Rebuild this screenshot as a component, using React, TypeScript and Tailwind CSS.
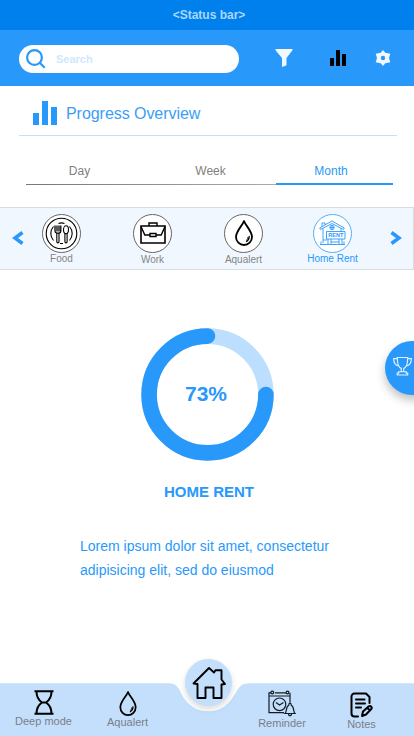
import React from "react";

type IconProps = { className?: string };

const Bars = ({ className }: IconProps) => (
  <svg viewBox="0 0 24 24" className={className} fill="currentColor" shapeRendering="crispEdges">
    <path d="M0 12h6v12H0zM9 0h6v24H9zM18 6h6v18h-6z" />
  </svg>
);

const Drop = ({ className }: IconProps) => (
  <svg viewBox="0 0 18 26" className={className} fill="none" stroke="currentColor" strokeWidth="1.8" strokeLinecap="round" strokeLinejoin="round">
    <path d="M9 1C7.500 5.500 1 11 1 17a8 8 0 0 0 16 0C17 11 10.500 5.500 9 1Z" />
    <path d="M14.200 16.500c0 2.500-1 4-2.700 5" strokeWidth="1.300" />
    <path d="M12.800 17.500c0 1.300-.4 2-1.200 2.600" strokeWidth=".8" />
  </svg>
);

const Plate = () => (
  <svg viewBox="0 0 33 33" className="size-[33px] text-black" fill="none" stroke="currentColor" strokeWidth="1.100">
    <circle cx="16.500" cy="16.500" r="15.300" />
    <path d="M8.500 9.500a10.500 10.500 0 0 0 0 14M24.500 9.500a10.500 10.500 0 0 1 0 14M13.500 6.400c2-.7 4-.7 6 0M15 26.500h3" />
    <path d="M11.800 16v8.500c0 1.800 2.200 1.800 2.200 0V16M19.900 16.500v8c0 1.800 2.200 1.800 2.200 0v-8" />
    <path d="M10 8.500V14c0 1.500 1 2 1.800 2.200H14c1-.2 1.800-.7 1.800-2.200V8.500M12 8.500v6M14 8.500v6" strokeWidth="1.300" />
    <ellipse cx="21" cy="12.700" rx="2.500" ry="3.900" />
  </svg>
);

const Briefcase = () => (
  <svg viewBox="0 0 26 22" className="-mt-0.5 h-[22px] w-[26px] text-black" fill="none" stroke="currentColor" strokeWidth="1.600">
    <path d="M1 4h24v17H1z" />
    <path d="M9 4V1h8v3M1 4.500 4.800 13H10M16 13h5.200L25 4.500M10 11.500h6v3h-6z" strokeWidth="1.400" />
  </svg>
);

const RentHouse = () => (
  <svg viewBox="0 0 28 26" className="-mt-0.5 h-[26px] w-7 text-[#2899fb]" fill="none" stroke="currentColor" strokeWidth=".9">
    <path d="M1.500 9.500.700 8 13 1l12.300 7-.8 1.500L13 3.500 1.500 9.500ZM4 8.500V23M22 8.500v3M3 6.500V3h3v2" />
    <path d="M7.500 11.500H26v7.500H7.500zM1 24.500h25M4 20h4M9 19v5M12 19v5M20 19v5M23 19v5M2 21.500v3M25 21.500v3M12 22h8" />
    <circle cx="13" cy="7.500" r="2.200" />
    <path d="M13 5.300v4.400M10.800 7.500h4.400" />
    <text x="16.800" y="17.300" textAnchor="middle" fontSize="5.500" fontWeight="bold" fill="currentColor" stroke="none" className="font-['Liberation_Sans',sans-serif]">RENT</text>
  </svg>
);

const Chevron = ({ className }: IconProps) => (
  <svg viewBox="0 0 12 14" className={className} fill="none" stroke="#2899fb" strokeWidth="3.500">
    <path d="M10.500 1.500 3 7l7.500 5.500" />
  </svg>
);

function Category({ label, active, children }: { label: string; active?: boolean; children: React.ReactNode }) {
  return (
    <div className="flex w-[91px] flex-col items-center">
      <div className={`flex size-[39px] items-center justify-center rounded-full border bg-white ${active ? "border-[#55aefb]" : "border-[#666]"}`}>
        {children}
      </div>
      <span className={`whitespace-nowrap text-[10px] leading-3 ${active ? "text-[#2899fb]" : "text-[#858585]"} ${label === "Work" || label === "Aqualert" ? "pt-px" : ""}`}>{label}</span>
    </div>
  );
}

export default function App() {
  return (
    <div className="relative flex h-[736px] w-[414px] flex-col overflow-hidden bg-white font-['Liberation_Sans',Arial,sans-serif]">
      <div className="flex h-[30px] shrink-0 items-center justify-center bg-[#0080ec] pl-1 text-xs font-bold text-[#a9d7ff]">&lt;Status bar&gt;</div>

      <header className="flex h-14 shrink-0 items-center bg-[#2899fb] pl-[19px]">
        <div className="mt-[2px] flex h-7 w-[220px] items-center rounded-full bg-white pl-[7px]">
          <svg viewBox="0 0 20 20" className="-mt-px size-5 text-[#2899fb]" fill="none" stroke="currentColor" strokeWidth="2.200">
            <circle cx="8.500" cy="8.500" r="7.400" />
            <path d="m13.700 13.700 5 5" />
          </svg>
          <span className="ml-[10px] text-[11px] font-bold text-[#cfe8ff]">Search</span>
        </div>
        <svg viewBox="0 0 18 18" className="ml-[36px] size-[18px]" fill="#f2f8ff">
          <path d="M.5 0h17v1.200L11.500 9v7.300L8 17.700H7V9L.5 1.200Z" />
        </svg>
        <Bars className="ml-[37px] size-4 text-black" />
        <svg viewBox="0 0 16 16" className="ml-[29px] size-4" fill="#f2f8ff" fillRule="evenodd">
          <path d="M8 0 10.300 2.700 15.300 3.700 14 8 15.300 12.300 10.300 13.300 8 16 5.700 13.300.7 12.300 2 8 .7 3.700 5.700 2.700ZM8 5.800a2.200 2.200 0 1 0 0 4.400 2.200 2.200 0 0 0 0-4.400Z" />
        </svg>
      </header>

      <section className="ml-[19px] flex h-[50px] w-[378px] shrink-0 items-center border-b border-[#c5e1fa] pl-[14px]">
        <Bars className="mt-[5px] size-6 text-[#2899fb]" />
        <h1 className="ml-[9px] mt-[6px] text-base tracking-[-0.05px] text-[#3b9ef4]">Progress Overview</h1>
      </section>

      <nav className="ml-[26px] mt-[24px] flex h-[26px] w-[367px] shrink-0 text-center text-xs text-[#808080]">
        <div className="flex w-[250px] flex-col justify-between">
          <div className="flex pt-[3px]">
            <span className="w-[107px]">Day</span>
            <span className="ml-[24px] w-[107px]">Week</span>
          </div>
          <div className="mb-px h-px bg-linear-to-r from-[#777] to-[#aaa]" />
        </div>
        <div className="mb-px w-[117px] border-b-2 border-[#2899fb] pr-[7px] pt-[3px] text-[#2899fb]">Month</div>
      </nav>

      <section className="mt-[21px] flex h-[63px] shrink-0 border border-l-0 border-[#d8dde2] bg-[#f0f7fe] pl-3 pt-1.5">
        <Chevron className="mt-[17px] h-[14px] w-3 shrink-0" />
        <div className="-ml-[8px] flex">
          <Category label="Food"><Plate /></Category>
          <Category label="Work"><Briefcase /></Category>
          <Category label="Aqualert"><Drop className="-mt-0.5 h-[26px] w-[18px] text-black" /></Category>
          <div className="-ml-[2px]"><Category label="Home Rent" active><RentHouse /></Category></div>
        </div>
        <Chevron className="ml-[12px] mt-[17px] h-[14px] w-3 shrink-0 rotate-180" />
      </section>

      <main className="flex flex-col text-[#2899fb]">
        <div className="ml-[141px] mt-[58px] grid size-[133px] place-items-center">
          <svg viewBox="0 0 133 133" className="col-start-1 row-start-1 size-[133px]" fill="none" strokeWidth="15.600">
            <circle cx="66.500" cy="66.500" r="58.400" stroke="#bddfff" />
            <path d="M66.500 8.100A58.400 58.400 0 1 0 124.900 66.500" stroke="#2899fb" strokeLinecap="round" />
          </svg>
          <strong className="col-start-1 row-start-1 mb-[2px] mr-[3px] text-[21px] leading-6">73%</strong>
        </div>
        <h2 className="mt-[22px] pl-1 text-center text-[15px] font-bold leading-[18px]">HOME RENT</h2>
        <p className="ml-[80px] mt-[33px] w-[260px] text-sm leading-6">Lorem ipsum dolor sit amet, consectetur adipisicing elit, sed do eiusmod</p>
      </main>

      <button className="absolute left-[385px] top-[341px] flex h-[54px] w-[56px] items-center rounded-full bg-[#2899fb] pl-2 shadow-[0_5px_10px_rgba(0,0,0,0.25)]">
        <svg viewBox="0 0 20 20" className="-mt-1 h-5 w-[19px]" fill="none" stroke="#e4f3ff" strokeWidth="1.200">
          <path d="M4.500 1h11c0 6-1.500 10.500-4.200 11.500v3.500H8.700v-3.500C6 11.500 4.500 7 4.500 1ZM4.500 2.200H.7c0 4 2 7.300 5.300 7.800M15.500 2.200h3.800c0 4-2 7.300-5.300 7.800M6 16h8v1.500h1.500v2h-11v-2H6Z" />
        </svg>
      </button>

      <footer className="absolute bottom-0 left-0 h-[83px] w-full text-[11px] leading-[13px] text-[#7a8088]">
        <svg viewBox="0 0 414 83" className="absolute inset-0 h-[83px] w-[414px]">
          <path d="M0 30.300H169C176 30.300 179 35 181.500 41C187 52 196 58.300 208.500 58.300C222 58.300 229 51 235 41C239 34 241 30.300 249 30.300H414V83H0Z" fill="#c3dffc" />
        </svg>
        <div className="absolute left-[185px] top-[6px] flex size-[47px] items-center justify-center rounded-full bg-[#c3dffc] shadow-[0_3px_6px_rgba(0,0,0,0.15)]">
          <svg viewBox="0 0 34 34" className="size-[34px] shrink-0" fill="none" stroke="#000" strokeWidth="1.900" strokeLinejoin="round">
            <path d="M1.500 17.500 17 2l5 4.500 1.500-2.200h6V13.500l3.500 4.500-3.500.5V32H21.500V21.500h-8V32H5.500V18Z" />
          </svg>
        </div>
        <div className="relative flex h-full">
          <div className="flex w-[87px] flex-col items-center pt-[37px]">
            <svg viewBox="0 0 20 25" className="h-[25px] w-5" fill="none" stroke="#000" strokeWidth="2">
              <path d="M.5 1.200h19M.5 23.800h19M2.500 1.500c0 6 2.500 9 5.500 11-3 2-5.500 5-5.500 11M17.500 1.500c0 6-2.500 9-5.500 11 3 2 5.500 5 5.500 11M7 12.500h6" />
            </svg>
            <span>Deep mode</span>
          </div>
          <div className="flex w-[81px] flex-col items-center pt-[38px]">
            <Drop className="h-[25px] w-[18px] text-black" />
            <span>Aqualert</span>
          </div>
          <div className="ml-[74px] flex w-[80px] flex-col items-center pt-[38px]">
            <svg viewBox="0 0 28 27" className="-mt-px h-[27px] w-7" fill="none" stroke="#151c24" strokeWidth="1.200">
              <path d="M3 2.800H1v19.800h15M7 2.800h11M22 2.800v10M1 6h21" />
              <circle cx="4.300" cy="2.500" r="1.400" /><circle cx="19.500" cy="2.500" r="1.400" />
              <circle cx="11.500" cy="14.300" r="6.300" />
              <path d="m8 12.500 3.500 2.500 4-2.500" />
              <path d="M17 23.500c2-1.500.5-6.500 3.700-8.200 0-2.500 2.600-2.500 2.600 0 3.200 1.700 1.700 6.700 3.700 8.200ZM20.500 23.500c0 3 3 3 3 0" fill="#c3dffc" />
            </svg>
            <span>Reminder</span>
          </div>
          <div className="flex w-[79px] flex-col items-center pt-[39px]">
            <svg viewBox="0 0 23 26" className="h-[26px] w-[23px]" fill="none" stroke="#000" strokeWidth="2" strokeLinecap="round" strokeLinejoin="round">
              <path d="M8 24.500H4.500a3 3 0 0 1-3-3V4.500a3 3 0 0 1 3-3H16l3.500 3.500v6M6 7.500h8.500M6 11.500h9M6 15.500h5" />
              <path d="m12 24 1-4.500 5.500-5c2-1.500 4 .5 2.800 2.500L16 22.500ZM17.500 16l2 2" />
            </svg>
            <span>Notes</span>
          </div>
        </div>
      </footer>
    </div>
  );
}
